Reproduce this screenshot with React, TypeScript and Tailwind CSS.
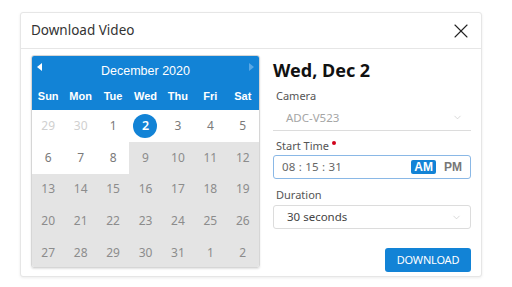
import React from 'react';
import { X, ChevronDown } from 'lucide-react';

const weekDays = ['Sun', 'Mon', 'Tue', 'Wed', 'Thu', 'Fri', 'Sat'];

// kind: 'out' = other month, 'in' = pickable, 'sel' = chosen, 'off' = disabled
type Cell = { d: number; kind: 'out' | 'in' | 'sel' | 'off' };

const cells: Cell[] = [
  { d: 29, kind: 'out' },
  { d: 30, kind: 'out' },
  { d: 1, kind: 'in' },
  { d: 2, kind: 'sel' },
  { d: 3, kind: 'in' },
  { d: 4, kind: 'in' },
  { d: 5, kind: 'in' },
  { d: 6, kind: 'in' },
  { d: 7, kind: 'in' },
  { d: 8, kind: 'in' },
  ...Array.from({ length: 23 }, (_, i) => ({ d: i + 9, kind: 'off' as const })),
  { d: 1, kind: 'off' },
  { d: 2, kind: 'off' },
];

function Calendar() {
  return (
    <div className="w-[229px] h-[213px] rounded-[3px] border border-[#d6d6d6] shadow-[0_1px_2px_rgba(0,0,0,0.12)] overflow-hidden shrink-0">
      <div className="bg-[#1283d6] text-white font-['Liberation_Sans',sans-serif]">
        <div className="h-[27px] flex px-[5px] pt-[6px]">
          <span className="w-0 h-0 border-y-[4px] border-y-transparent border-r-[5px] border-r-white mt-[1px]" />
          <div className="flex-1 text-center text-[12.5px] leading-[15px] mt-[2px]">December 2020</div>
          <span className="w-0 h-0 border-y-[4px] border-y-transparent border-l-[5px] border-l-[#5aa9e6] mt-[1px]" />
        </div>
        <div className="h-[27px] grid grid-cols-7 items-center text-center text-[11px] font-bold">
          {weekDays.map((w) => (
            <div key={w}>{w}</div>
          ))}
        </div>
      </div>
      <div className="grid grid-cols-7 grid-rows-5 h-[159px] text-[12px]">
        {cells.map((c, i) => (
          <div
            key={i}
            className={
              'flex items-center justify-center ' +
              (c.kind === 'off' ? 'bg-[#e4e4e4] text-[#8c8c8c]' : 'bg-white') +
              (c.kind === 'out' ? ' text-[#d0d0d0]' : '') +
              (c.kind === 'in' ? ' text-[#7a7a7a]' : '')
            }
          >
            {c.kind === 'sel' ? (
              <span className="w-[24px] h-[24px] rounded-full bg-[#1283d6] text-white flex items-center justify-center text-[12.5px] font-semibold">
                {c.d}
              </span>
            ) : (
              c.d
            )}
          </div>
        ))}
      </div>
    </div>
  );
}

export default function App() {
  return (
    <div className="w-[512px] h-[287px] bg-white pt-[12px] pl-[20px] font-['Noto_Sans',sans-serif]">
      <div className="w-[462px] h-[265px] bg-white border border-[#e6e6e6] rounded-[3px] shadow-[0_1px_3px_rgba(0,0,0,0.08)]">
        {/* header */}
        <div className="h-[36px] flex items-center justify-between pl-[10px] pr-[8px] border-b border-[#e6e6e6]">
          <span className="text-[13.5px] text-[#333]">Download Video</span>
          <X className="w-[24px] h-[24px] text-[#222]" strokeWidth={1.1} />
        </div>

        {/* body */}
        <div className="flex pl-[10px] pt-[6px]">
          <Calendar />

          <div className="ml-[13px] w-[198px] flex flex-col">
            <div className="mt-[2px] text-[18px] leading-[26px] font-bold text-[#111]">Wed, Dec 2</div>

            <div className="mt-[5px] pl-[3px] text-[11px] leading-[16px] text-[#555]">Camera</div>
            <div className="mt-[1px] h-[26px] flex items-center justify-between pl-[13px] pr-[8px] border-b border-[#dcdcdc]">
              <span className="text-[11.5px] text-[#a5a5a5]">ADC-V523</span>
              <ChevronDown className="w-[11px] h-[11px] text-[#c8c8c8]" strokeWidth={1.5} />
            </div>

            <div className="mt-[7px] pl-[3px] text-[11px] leading-[16px] text-[#555] flex items-start">
              Start Time
              <span className="ml-[3px] mt-[3px] w-[4px] h-[4px] rounded-full bg-[#d0021b]" />
            </div>
            <div className="mt-[1px] h-[24px] flex items-center justify-between pl-[8px] pr-[8px] border border-[#8ab8e6] rounded-[3px]">
              <span className="text-[11.5px] text-[#666] tracking-[0.2px]">08 : 15 : 31</span>
              <div className="flex items-center gap-[8px] font-['Liberation_Sans',sans-serif] font-bold text-[12px]">
                <span className="px-[3px] h-[14px] leading-[14px] rounded-[2px] bg-[#1283d6] text-white">AM</span>
                <span className="text-[#777]">PM</span>
              </div>
            </div>

            <div className="mt-[8px] pl-[3px] text-[11px] leading-[16px] text-[#555]">Duration</div>
            <div className="mt-[2px] h-[24px] flex items-center justify-between pl-[13px] pr-[8px] border border-[#dcdcdc] rounded-[3px]">
              <span className="text-[11.5px] text-[#444]">30 seconds</span>
              <ChevronDown className="w-[11px] h-[11px] text-[#c8c8c8]" strokeWidth={1.5} />
            </div>

            <button className="mt-[19px] self-end w-[86px] h-[24px] rounded-[3px] bg-[#1283d6] text-white text-[11px] tracking-[-0.2px]">
              DOWNLOAD
            </button>
          </div>
        </div>
      </div>
    </div>
  );
}
